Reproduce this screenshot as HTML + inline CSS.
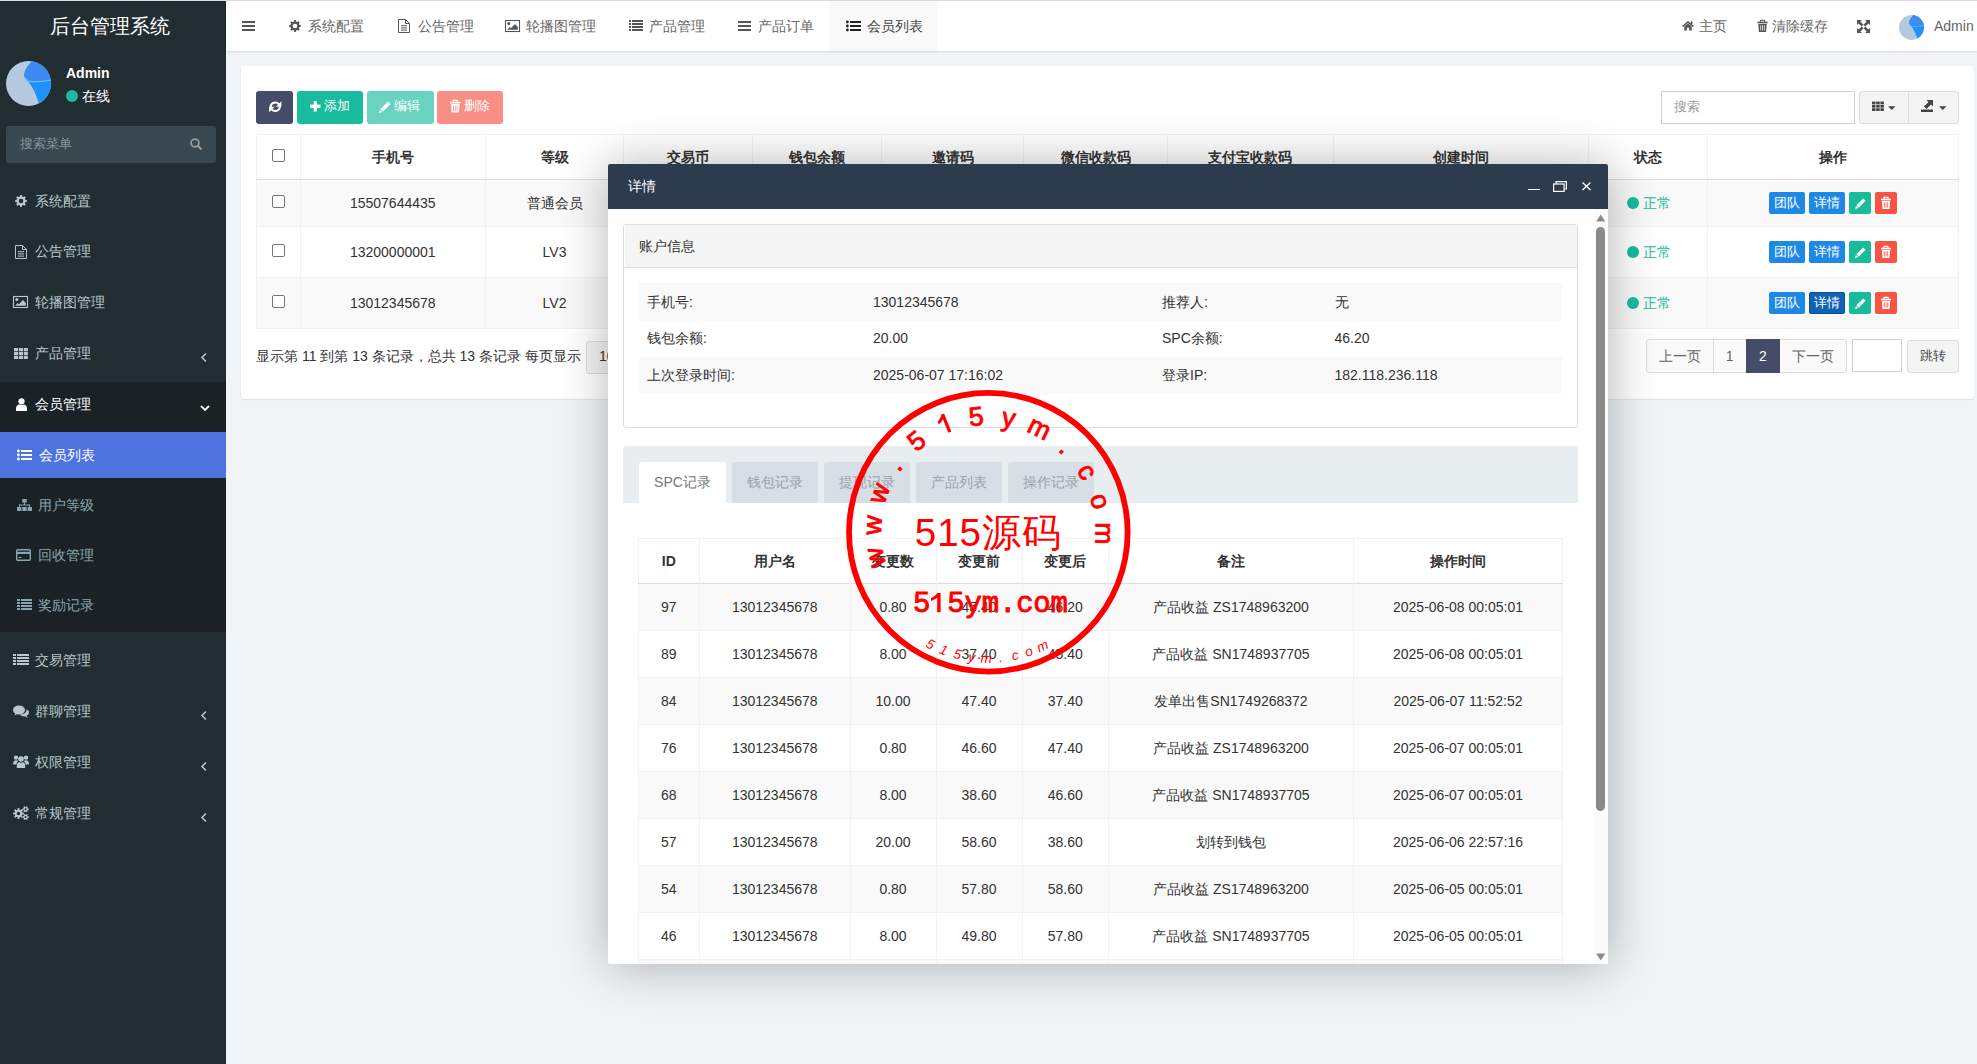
<!DOCTYPE html>
<html><head><meta charset="utf-8"><style>
*{box-sizing:border-box;margin:0;padding:0}
html,body{width:1977px;height:1064px;overflow:hidden}
body{font-family:"Liberation Sans",sans-serif;font-size:14px;color:#333;background:#f1f4f6;position:relative}
.abs{position:absolute}
.t{line-height:20px;white-space:nowrap}
svg.abs{display:block;overflow:visible}
</style></head><body>
<div class="abs" style="left:0;top:0;width:1977px;height:1px;background:#d9d9d9;z-index:50"></div>
<div class="abs" style="left:0;top:1px;width:226px;height:1063px;background:#222d32"></div>
<div class="abs t " style="left:-3px;top:16px;width:226px;text-align:center;font-size:20px;color:#fff;">后台管理系统</div>
<svg class="abs" style="left:6px;top:61px;width:45px;height:45px" viewBox="0 0 45 45">
<defs><clipPath id="av1"><circle cx="22.5" cy="22.5" r="22.5"/></clipPath>
<linearGradient id="avg" x1="0" y1="0" x2="0" y2="1"><stop offset="0" stop-color="#4a8ff2"/><stop offset="0.45" stop-color="#3a88f0"/><stop offset="0.455" stop-color="#72ccff"/><stop offset="0.49" stop-color="#2196ff"/><stop offset="1" stop-color="#1a84ec"/></linearGradient></defs>
<g clip-path="url(#av1)"><rect width="45" height="45" fill="#b5cae0"/>
<path d="M26.3,0 C21,5 17.5,11 18.4,15.5 C19,18 21,20 23,21.5 C25.5,25 29.5,31 33,43 L45,45 L45,0Z" fill="#1f93fd"/><path d="M26.3,0 C21,5 17.5,11 18.4,15.5 C20,19.5 24,20.8 28,20.8 C35,20.8 40,19.5 45,19.2 L45,0Z" fill="#3d8af1"/><path d="M18.5,16 C20,19.5 24,20.8 28,20.8 C35,20.8 40,19.5 45,19.2" fill="none" stroke="#70cdff" stroke-width="0.9"/></g></svg>
<div class="abs t " style="left:66px;top:63px;font-weight:bold;color:#fff;font-size:14px">Admin</div>
<div class="abs" style="left:66px;top:90px;width:12px;height:12px;border-radius:50%;background:#18bc9c"></div>
<div class="abs t " style="left:82px;top:86px;color:#fff;font-size:14px">在线</div>
<div class="abs" style="left:6px;top:126px;width:210px;height:37px;border-radius:3px;background:#374850"></div>
<div class="abs t " style="left:20px;top:134px;color:#8a9499;font-size:13px">搜索菜单</div>
<svg class="abs" style="left:190px;top:138px;width:12px;height:12px;color:#999;" viewBox="0 0 12 12" fill="#999" color="#999"><circle cx="5" cy="5" r="3.9" fill="none" stroke="currentColor" stroke-width="1.8"/><path d="M7.8,7.8 L11,11" stroke="currentColor" stroke-width="2.2" stroke-linecap="round"/></svg>
<div class="abs" style="left:0;top:382px;width:226px;height:250px;background:#1a2226"></div>
<div class="abs" style="left:0;top:432px;width:226px;height:46px;background:#4e73df"></div>
<div class="abs" style="left:0;top:0;color:#b8c7ce"><svg class="abs" style="left:15px;top:195px;width:12px;height:12px;color:#b8c7ce;" viewBox="0 0 13 13" fill="#b8c7ce" color="#b8c7ce"><path fill-rule="evenodd" d="M5.33,1.64 L5.63,0.06 L7.37,0.06 L7.67,1.64 L9.11,2.24 L10.44,1.33 L11.67,2.56 L10.76,3.89 L11.36,5.33 L12.94,5.63 L12.94,7.37 L11.36,7.67 L10.76,9.11 L11.67,10.44 L10.44,11.67 L9.11,10.76 L7.67,11.36 L7.37,12.94 L5.63,12.94 L5.33,11.36 L3.89,10.76 L2.56,11.67 L1.33,10.44 L2.24,9.11 L1.64,7.67 L0.06,7.37 L0.06,5.63 L1.64,5.33 L2.24,3.89 L1.33,2.56 L2.56,1.33 L3.89,2.24ZM6.5,4.0 A2.5,2.5 0 1,0 6.5,9.0 A2.5,2.5 0 1,0 6.5,4.0Z"/></svg></div>
<div class="abs t " style="left:35px;top:191px;color:#b8c7ce">系统配置</div>
<div class="abs" style="left:0;top:0;color:#b8c7ce"><svg class="abs" style="left:15px;top:245px;width:12px;height:14px;color:#b8c7ce;" viewBox="0 0 12 14" fill="#b8c7ce" color="#b8c7ce"><path fill="none" stroke="currentColor" stroke-width="1" d="M0.5,0.5 H7.5 L11.5,4.5 V13.5 H0.5 Z M7.5,0.5 V4.5 H11.5"/><rect x="3" y="6.2" width="6" height="1"/><rect x="3" y="8.4" width="6" height="1"/><rect x="3" y="10.6" width="6" height="1"/></svg></div>
<div class="abs t " style="left:35px;top:241px;color:#b8c7ce">公告管理</div>
<div class="abs" style="left:0;top:0;color:#b8c7ce"><svg class="abs" style="left:13px;top:296px;width:15px;height:12px;color:#b8c7ce;" viewBox="0 0 15 12" fill="#b8c7ce" color="#b8c7ce"><rect x="0.5" y="0.5" width="14" height="11" fill="none" stroke="currentColor" stroke-width="1.1"/><circle cx="3.8" cy="3.4" r="1.5"/><path d="M2.2,9.7 L4.6,7 L5.9,8.2 L10,4 L12.8,6.9 V9.7 Z"/></svg></div>
<div class="abs t " style="left:35px;top:292px;color:#b8c7ce">轮播图管理</div>
<div class="abs" style="left:0;top:0;color:#b8c7ce"><svg class="abs" style="left:14px;top:348px;width:14px;height:11px;color:#b8c7ce;" viewBox="0 0 14 11" fill="#b8c7ce" color="#b8c7ce"><rect x="0.0" y="0.0" width="4.1" height="3.2"/><rect x="0.0" y="3.9" width="4.1" height="3.2"/><rect x="0.0" y="7.8" width="4.1" height="3.2"/><rect x="4.9" y="0.0" width="4.1" height="3.2"/><rect x="4.9" y="3.9" width="4.1" height="3.2"/><rect x="4.9" y="7.8" width="4.1" height="3.2"/><rect x="9.8" y="0.0" width="4.1" height="3.2"/><rect x="9.8" y="3.9" width="4.1" height="3.2"/><rect x="9.8" y="7.8" width="4.1" height="3.2"/></svg></div>
<div class="abs t " style="left:35px;top:343px;color:#b8c7ce">产品管理</div>
<svg class="abs" style="left:201px;top:352.5px;width:6px;height:9px;color:#b8c7ce;" viewBox="0 0 6 9" fill="#b8c7ce" color="#b8c7ce"><path d="M5,0.5 L1,4.5 L5,8.5" fill="none" stroke="currentColor" stroke-width="1.6"/></svg>
<svg class="abs" style="left:16px;top:397.5px;width:11px;height:13px;color:#fff;" viewBox="0 0 11 13" fill="#fff" color="#fff"><circle cx="5.5" cy="3.3" r="3.1"/><path d="M0,13 V10.5 C0,8 1.8,6.8 3.2,6.6 C4,7.2 7,7.2 7.8,6.6 C9.2,6.8 11,8 11,10.5 V13 Z"/></svg>
<div class="abs t " style="left:35px;top:394px;color:#fff">会员管理</div>
<svg class="abs" style="left:200px;top:405px;width:10px;height:6px;color:#fff;" viewBox="0 0 10 6" fill="#fff" color="#fff"><path d="M1,1 L5,5 L9,1" fill="none" stroke="currentColor" stroke-width="1.8"/></svg>
<svg class="abs" style="left:17px;top:450px;width:15px;height:10px;color:#fff;" viewBox="0 0 15 10" fill="#fff" color="#fff"><circle cx="1.4" cy="1" r="1.4"/><rect x="4" y="0" width="11" height="2"/><circle cx="1.4" cy="5" r="1.4"/><rect x="4" y="4" width="11" height="2"/><circle cx="1.4" cy="9" r="1.4"/><rect x="4" y="8" width="11" height="2"/></svg>
<div class="abs t " style="left:39px;top:444.5px;color:#fff">会员列表</div>
<svg class="abs" style="left:16.5px;top:499px;width:15px;height:12px;color:#8aa4af;" viewBox="0 0 15 12" fill="#8aa4af" color="#8aa4af"><rect x="5.2" y="0" width="4.6" height="3.6"/><rect x="7" y="3.6" width="1" height="2.4"/><rect x="2" y="5.5" width="11" height="1"/><rect x="2" y="5.5" width="1" height="2.5"/><rect x="12" y="5.5" width="1" height="2.5"/><rect x="0" y="8" width="4.4" height="4"/><rect x="5.3" y="8" width="4.4" height="4"/><rect x="10.6" y="8" width="4.4" height="4"/></svg>
<div class="abs t " style="left:38px;top:495px;color:#8aa4af">用户等级</div>
<svg class="abs" style="left:16px;top:549px;width:15px;height:12px;color:#8aa4af;" viewBox="0 0 15 12" fill="#8aa4af" color="#8aa4af"><rect x="0.7" y="0.7" width="13.6" height="10.6" rx="1" fill="none" stroke="currentColor" stroke-width="1.4"/><rect x="0.7" y="2.8" width="13.6" height="2.2"/><rect x="2.5" y="8" width="3" height="1"/></svg>
<div class="abs t " style="left:38px;top:545px;color:#8aa4af">回收管理</div>
<svg class="abs" style="left:16.5px;top:599px;width:15px;height:11px;color:#8aa4af;" viewBox="0 0 15 11" fill="#8aa4af" color="#8aa4af"><rect x="0" y="0" width="3" height="2"/><rect x="4" y="0" width="11" height="2"/><rect x="0" y="3" width="3" height="2"/><rect x="4" y="3" width="11" height="2"/><rect x="0" y="6" width="3" height="2"/><rect x="4" y="6" width="11" height="2"/><rect x="0" y="9" width="3" height="2"/><rect x="4" y="9" width="11" height="2"/></svg>
<div class="abs t " style="left:38px;top:595px;color:#8aa4af">奖励记录</div>
<svg class="abs" style="left:13px;top:654px;width:16px;height:11px;color:#b8c7ce;" viewBox="0 0 16 11" fill="#b8c7ce" color="#b8c7ce"><rect x="0" y="0" width="3" height="2"/><rect x="4" y="0" width="12" height="2"/><rect x="0" y="3" width="3" height="2"/><rect x="4" y="3" width="12" height="2"/><rect x="0" y="6" width="3" height="2"/><rect x="4" y="6" width="12" height="2"/><rect x="0" y="9" width="3" height="2"/><rect x="4" y="9" width="12" height="2"/></svg>
<div class="abs t " style="left:35px;top:650px;color:#b8c7ce">交易管理</div>
<svg class="abs" style="left:13px;top:704.5px;width:16px;height:13px;color:#b8c7ce;" viewBox="0 0 16 13" fill="#b8c7ce" color="#b8c7ce"><ellipse cx="6" cy="5" rx="6" ry="4.6"/><path d="M1.5,10.5 L3,7 L5,8.5Z"/><path d="M13.8,4.2 C15.3,5 16,6.2 16,7.4 C16,8.8 15,10 13.5,10.6 L14.8,12.8 L11.5,11.2 C9,11.3 7.5,10.6 6.6,9.7 C10.5,9.6 13.6,7.5 13.8,4.2Z"/></svg>
<div class="abs t " style="left:35px;top:701px;color:#b8c7ce">群聊管理</div>
<svg class="abs" style="left:201px;top:710.5px;width:6px;height:9px;color:#b8c7ce;" viewBox="0 0 6 9" fill="#b8c7ce" color="#b8c7ce"><path d="M5,0.5 L1,4.5 L5,8.5" fill="none" stroke="currentColor" stroke-width="1.6"/></svg>
<svg class="abs" style="left:13px;top:755px;width:16px;height:13px;color:#b8c7ce;" viewBox="0 0 16 13" fill="#b8c7ce" color="#b8c7ce"><circle cx="3" cy="2.6" r="2.2"/><circle cx="13" cy="2.6" r="2.2"/><circle cx="8" cy="4" r="2.8"/><path d="M0,9.5 C0,6.5 1.5,5.3 3,5.3 C4,5.3 4.7,5.8 5,6.2 C4,7 3.5,8.2 3.5,9.5Z"/><path d="M16,9.5 C16,6.5 14.5,5.3 13,5.3 C12,5.3 11.3,5.8 11,6.2 C12,7 12.5,8.2 12.5,9.5Z"/><path d="M3.8,13 V10.5 C3.8,8.3 5.3,7.2 6.2,7.2 C7,7.8 9,7.8 9.8,7.2 C10.7,7.2 12.2,8.3 12.2,10.5 V13Z"/></svg>
<div class="abs t " style="left:35px;top:752px;color:#b8c7ce">权限管理</div>
<svg class="abs" style="left:201px;top:761.5px;width:6px;height:9px;color:#b8c7ce;" viewBox="0 0 6 9" fill="#b8c7ce" color="#b8c7ce"><path d="M5,0.5 L1,4.5 L5,8.5" fill="none" stroke="currentColor" stroke-width="1.6"/></svg>
<svg class="abs" style="left:13px;top:806px;width:16px;height:14px;color:#b8c7ce;" viewBox="0 0 16 14" fill="#b8c7ce" color="#b8c7ce"><path fill-rule="evenodd" d="M9.28,6.53 L10.93,6.64 L10.93,8.36 L9.28,8.47 L8.86,9.49 L9.95,10.73 L8.73,11.95 L7.49,10.86 L6.47,11.28 L6.36,12.93 L4.64,12.93 L4.53,11.28 L3.51,10.86 L2.27,11.95 L1.05,10.73 L2.14,9.49 L1.72,8.47 L0.07,8.36 L0.07,6.64 L1.72,6.53 L2.14,5.51 L1.05,4.27 L2.27,3.05 L3.51,4.14 L4.53,3.72 L4.64,2.07 L6.36,2.07 L6.47,3.72 L7.49,4.14 L8.73,3.05 L9.95,4.27 L8.86,5.51ZM5.5,5.7 A1.8,1.8 0 1,0 5.5,9.3 A1.8,1.8 0 1,0 5.5,5.7ZM14.77,2.44 L15.73,2.53 L15.73,3.87 L14.77,3.96 L14.34,4.70 L14.74,5.58 L13.59,6.24 L13.03,5.46 L12.17,5.46 L11.61,6.24 L10.46,5.58 L10.86,4.70 L10.43,3.96 L9.47,3.87 L9.47,2.53 L10.43,2.44 L10.86,1.70 L10.46,0.82 L11.61,0.16 L12.17,0.94 L13.03,0.94 L13.59,0.16 L14.74,0.82 L14.34,1.70ZM12.6,2.2 A1.0,1.0 0 1,0 12.6,4.2 A1.0,1.0 0 1,0 12.6,2.2ZM14.77,10.24 L15.73,10.33 L15.73,11.67 L14.77,11.76 L14.34,12.50 L14.74,13.38 L13.59,14.04 L13.03,13.26 L12.17,13.26 L11.61,14.04 L10.46,13.38 L10.86,12.50 L10.43,11.76 L9.47,11.67 L9.47,10.33 L10.43,10.24 L10.86,9.50 L10.46,8.62 L11.61,7.96 L12.17,8.74 L13.03,8.74 L13.59,7.96 L14.74,8.62 L14.34,9.50ZM12.6,10.0 A1.0,1.0 0 1,0 12.6,12.0 A1.0,1.0 0 1,0 12.6,10.0Z"/></svg>
<div class="abs t " style="left:35px;top:803px;color:#b8c7ce">常规管理</div>
<svg class="abs" style="left:201px;top:812.5px;width:6px;height:9px;color:#b8c7ce;" viewBox="0 0 6 9" fill="#b8c7ce" color="#b8c7ce"><path d="M5,0.5 L1,4.5 L5,8.5" fill="none" stroke="currentColor" stroke-width="1.6"/></svg>
<div class="abs" style="left:226px;top:1px;width:1751px;height:50px;background:#fff;box-shadow:0 1px 2px rgba(0,0,0,.12)"></div>
<div class="abs" style="left:829px;top:1px;width:109px;height:50px;background:#f9f9f9"></div>
<svg class="abs" style="left:242px;top:21px;width:13px;height:10px;color:#555;" viewBox="0 0 13 10" fill="#555" color="#555"><rect x="0" y="0" width="13" height="2"/><rect x="0" y="4" width="13" height="2"/><rect x="0" y="8" width="13" height="2"/></svg>
<svg class="abs" style="left:289px;top:20px;width:12px;height:12px;color:#555;" viewBox="0 0 13 13" fill="#555" color="#555"><path fill-rule="evenodd" d="M5.33,1.64 L5.63,0.06 L7.37,0.06 L7.67,1.64 L9.11,2.24 L10.44,1.33 L11.67,2.56 L10.76,3.89 L11.36,5.33 L12.94,5.63 L12.94,7.37 L11.36,7.67 L10.76,9.11 L11.67,10.44 L10.44,11.67 L9.11,10.76 L7.67,11.36 L7.37,12.94 L5.63,12.94 L5.33,11.36 L3.89,10.76 L2.56,11.67 L1.33,10.44 L2.24,9.11 L1.64,7.67 L0.06,7.37 L0.06,5.63 L1.64,5.33 L2.24,3.89 L1.33,2.56 L2.56,1.33 L3.89,2.24ZM6.5,4.0 A2.5,2.5 0 1,0 6.5,9.0 A2.5,2.5 0 1,0 6.5,4.0Z"/></svg>
<div class="abs t " style="left:308px;top:16px;color:#666">系统配置</div>
<svg class="abs" style="left:398px;top:19px;width:12px;height:14px;color:#555;" viewBox="0 0 12 14" fill="#555" color="#555"><path fill="none" stroke="currentColor" stroke-width="1" d="M0.5,0.5 H7.5 L11.5,4.5 V13.5 H0.5 Z M7.5,0.5 V4.5 H11.5"/><rect x="3" y="6.2" width="6" height="1"/><rect x="3" y="8.4" width="6" height="1"/><rect x="3" y="10.6" width="6" height="1"/></svg>
<div class="abs t " style="left:418px;top:16px;color:#666">公告管理</div>
<svg class="abs" style="left:505px;top:20px;width:15px;height:12px;color:#555;" viewBox="0 0 15 12" fill="#555" color="#555"><rect x="0.5" y="0.5" width="14" height="11" fill="none" stroke="currentColor" stroke-width="1.1"/><circle cx="3.8" cy="3.4" r="1.5"/><path d="M2.2,9.7 L4.6,7 L5.9,8.2 L10,4 L12.8,6.9 V9.7 Z"/></svg>
<div class="abs t " style="left:526px;top:16px;color:#666">轮播图管理</div>
<svg class="abs" style="left:629px;top:20px;width:14px;height:11px;color:#555;" viewBox="0 0 14 11" fill="#555" color="#555"><rect x="0" y="0" width="2" height="2"/><rect x="3" y="0" width="11" height="2"/><rect x="0" y="3" width="2" height="2"/><rect x="3" y="3" width="11" height="2"/><rect x="0" y="6" width="2" height="2"/><rect x="3" y="6" width="11" height="2"/><rect x="0" y="9" width="2" height="2"/><rect x="3" y="9" width="11" height="2"/></svg>
<div class="abs t " style="left:648.5px;top:16px;color:#666">产品管理</div>
<svg class="abs" style="left:738px;top:21px;width:13px;height:10px;color:#555;" viewBox="0 0 13 10" fill="#555" color="#555"><rect x="0" y="0" width="13" height="2"/><rect x="0" y="4" width="13" height="2"/><rect x="0" y="8" width="13" height="2"/></svg>
<div class="abs t " style="left:757.5px;top:16px;color:#666">产品订单</div>
<svg class="abs" style="left:846px;top:21px;width:15px;height:10px;color:#222;" viewBox="0 0 15 10" fill="#222" color="#222"><circle cx="1.4" cy="1" r="1.4"/><rect x="4" y="0" width="11" height="2"/><circle cx="1.4" cy="5" r="1.4"/><rect x="4" y="4" width="11" height="2"/><circle cx="1.4" cy="9" r="1.4"/><rect x="4" y="8" width="11" height="2"/></svg>
<div class="abs t " style="left:866.5px;top:16px;color:#444">会员列表</div>
<svg class="abs" style="left:1682px;top:20px;width:12px;height:11px;color:#555;" viewBox="0 0 13 11" fill="#555" color="#555"><path d="M6.5,0.5 L13,6 L11.8,7.2 L6.5,2.8 L1.2,7.2 L0,6 Z"/><path d="M2.5,6.5 L6.5,3.3 L10.5,6.5 V11 H7.7 V8 H5.3 V11 H2.5Z"/><rect x="9.5" y="1" width="1.8" height="3"/></svg>
<div class="abs t " style="left:1699px;top:16px;color:#666">主页</div>
<svg class="abs" style="left:1757px;top:20px;width:11px;height:12px;color:#555;" viewBox="0 0 11 13" fill="#555" color="#555"><rect x="0" y="1.8" width="11" height="1.8"/><path d="M3.3,2 V0.3 H7.7 V2" fill="none" stroke="currentColor" stroke-width="1.2"/><path fill-rule="evenodd" d="M1,4.2 H10 L9.4,13 H1.6Z M3.2,5.6 V11.4 H4 V5.6Z M5.1,5.6 V11.4 H5.9 V5.6Z M7,5.6 V11.4 H7.8 V5.6Z"/></svg>
<div class="abs t " style="left:1772px;top:16px;color:#666">清除缓存</div>
<svg class="abs" style="left:1857px;top:19.5px;width:13px;height:13px;color:#555;" viewBox="0 0 13 13" fill="#555" color="#555"><path d="M0,0 H5 L3.4,1.6 L6.5,4.7 L4.7,6.5 L1.6,3.4 L0,5Z"/><path d="M13,0 V5 L11.4,3.4 L8.3,6.5 L6.5,4.7 L9.6,1.6 L8,0Z"/><path d="M0,13 V8 L1.6,9.6 L4.7,6.5 L6.5,8.3 L3.4,11.4 L5,13Z"/><path d="M13,13 H8 L9.6,11.4 L6.5,8.3 L8.3,6.5 L11.4,9.6 L13,8Z"/></svg>
<svg class="abs" style="left:1899px;top:15px;width:25px;height:25px" viewBox="0 0 45 45">
<g clip-path="url(#av1)"><rect width="45" height="45" fill="#b3c9df"/>
<path d="M26.3,0 C21,5 17.5,11 18.4,15.5 C19,18 21,20 23,21.5 C25.5,25 29.5,31 33,43 L45,45 L45,0Z" fill="#1f93fd"/><path d="M26.3,0 C21,5 17.5,11 18.4,15.5 C20,19.5 24,20.8 28,20.8 C35,20.8 40,19.5 45,19.2 L45,0Z" fill="#3d8af1"/><path d="M18.5,16 C20,19.5 24,20.8 28,20.8 C35,20.8 40,19.5 45,19.2" fill="none" stroke="#70cdff" stroke-width="0.9"/></g></svg>
<div class="abs t " style="left:1934px;top:16px;color:#666">Admin</div>
<div class="abs" style="left:241px;top:66px;width:1733px;height:333px;background:#fff;border-radius:3px;box-shadow:0 1px 1px rgba(0,0,0,.07), -1px 0 0 rgba(0,0,0,.02)"></div>
<div class="abs" style="left:256px;top:91px;width:37px;height:33px;background:#444c69;border-radius:3px;"></div>
<svg class="abs" style="left:268.5px;top:100.5px;width:12.5px;height:11.5px;color:#fff;" viewBox="0 0 13 12" fill="#fff" color="#fff"><path d="M1.6,6.2 A4.9,4.9 0 0,1 10.2,3.3" fill="none" stroke="currentColor" stroke-width="2.1"/><path d="M12.9,0.2 V6 H7.1Z"/><path d="M11.4,5.8 A4.9,4.9 0 0,1 2.8,8.7" fill="none" stroke="currentColor" stroke-width="2.1"/><path d="M0.1,11.8 V6 H5.9Z"/></svg>
<div class="abs" style="left:297px;top:91px;width:66px;height:33px;background:#18bc9c;border-radius:3px;"></div>
<svg class="abs" style="left:310px;top:101px;width:10.5px;height:10.5px;color:#fff;" viewBox="0 0 11 11" fill="#fff" color="#fff"><rect x="3.8" y="0" width="3.4" height="11"/><rect x="0" y="3.8" width="11" height="3.4"/></svg>
<div class="abs t " style="left:324px;top:96px;color:#fff;font-size:13px">添加</div>
<div class="abs" style="left:367px;top:91px;width:67px;height:33px;background:#69d3bf;border-radius:3px;"></div>
<svg class="abs" style="left:379px;top:100.5px;width:12px;height:12px;color:#fff;" viewBox="0 0 12 12" fill="#fff" color="#fff"><path d="M9,0.5 L11.5,3 L4,10.5 L1.5,8Z"/><path d="M1,8.6 L3.4,11 L0,12Z"/></svg>
<div class="abs t " style="left:394px;top:96px;color:#fff;font-size:13px">编辑</div>
<div class="abs" style="left:437px;top:91px;width:66px;height:33px;background:#f98f84;border-radius:3px;"></div>
<svg class="abs" style="left:450px;top:100px;width:10.5px;height:12.5px;color:#fff;" viewBox="0 0 11 13" fill="#fff" color="#fff"><rect x="0" y="1.8" width="11" height="1.8"/><path d="M3.3,2 V0.3 H7.7 V2" fill="none" stroke="currentColor" stroke-width="1.2"/><path fill-rule="evenodd" d="M1,4.2 H10 L9.4,13 H1.6Z M3.2,5.6 V11.4 H4 V5.6Z M5.1,5.6 V11.4 H5.9 V5.6Z M7,5.6 V11.4 H7.8 V5.6Z"/></svg>
<div class="abs t " style="left:464px;top:96px;color:#fff;font-size:13px">删除</div>
<div class="abs" style="left:1661px;top:91px;width:194px;height:33px;background:#fff;border-radius:0px;border:1px solid #ccd3dc;"></div>
<div class="abs t " style="left:1674px;top:97px;color:#999;font-size:13px">搜索</div>
<div class="abs" style="left:1859px;top:91px;width:100px;height:33px;background:#f4f4f4;border-radius:3px;border:1px solid #ddd;"></div>
<div class="abs" style="left:1908px;top:91px;width:1px;height:33px;background:#ddd"></div>
<svg class="abs" style="left:1872px;top:99.5px;width:12px;height:12.5px;color:#444;" viewBox="0 0 14 11" fill="#444" color="#444"><rect x="0.0" y="0.0" width="4.1" height="3.2"/><rect x="0.0" y="3.9" width="4.1" height="3.2"/><rect x="0.0" y="7.8" width="4.1" height="3.2"/><rect x="4.9" y="0.0" width="4.1" height="3.2"/><rect x="4.9" y="3.9" width="4.1" height="3.2"/><rect x="4.9" y="7.8" width="4.1" height="3.2"/><rect x="9.8" y="0.0" width="4.1" height="3.2"/><rect x="9.8" y="3.9" width="4.1" height="3.2"/><rect x="9.8" y="7.8" width="4.1" height="3.2"/></svg>
<svg class="abs" style="left:1888px;top:106px;width:7.5px;height:4px;color:#444;" viewBox="0 0 8 4" fill="#444" color="#444"><path d="M0,0 H8 L4,4Z"/></svg>
<svg class="abs" style="left:1921px;top:99px;width:13px;height:13px;color:#444;" viewBox="0 0 13 13" fill="#444" color="#444"><rect x="0" y="10.5" width="12" height="2.5"/><path d="M5.5,1 H12 V7.5 L10,5.5 L5.5,10 L3,7.5 L7.5,3 Z"/></svg>
<svg class="abs" style="left:1938.5px;top:106px;width:7.5px;height:4px;color:#444;" viewBox="0 0 8 4" fill="#444" color="#444"><path d="M0,0 H8 L4,4Z"/></svg>
<div class="abs" style="left:256px;top:180px;width:1703px;height:46px;background:#f9f9f9"></div>
<div class="abs" style="left:256px;top:277px;width:1703px;height:51px;background:#f9f9f9"></div>
<div class="abs" style="left:256px;top:134px;width:1703px;height:195px;border:1px solid #f2f2f2"></div>
<div class="abs" style="left:299.5px;top:134px;width:1px;height:195px;background:#f2f2f2"></div>
<div class="abs" style="left:485.0px;top:134px;width:1px;height:195px;background:#f2f2f2"></div>
<div class="abs" style="left:623.0px;top:134px;width:1px;height:195px;background:#f2f2f2"></div>
<div class="abs" style="left:752.0px;top:134px;width:1px;height:195px;background:#f2f2f2"></div>
<div class="abs" style="left:881.0px;top:134px;width:1px;height:195px;background:#f2f2f2"></div>
<div class="abs" style="left:1023.0px;top:134px;width:1px;height:195px;background:#f2f2f2"></div>
<div class="abs" style="left:1167.0px;top:134px;width:1px;height:195px;background:#f2f2f2"></div>
<div class="abs" style="left:1332.5px;top:134px;width:1px;height:195px;background:#f2f2f2"></div>
<div class="abs" style="left:1588.0px;top:134px;width:1px;height:195px;background:#f2f2f2"></div>
<div class="abs" style="left:1707.0px;top:134px;width:1px;height:195px;background:#f2f2f2"></div>
<div class="abs" style="left:256px;top:179px;width:1703px;height:1px;background:#ddd"></div>
<div class="abs" style="left:256px;top:226px;width:1703px;height:1px;background:#f2f2f2"></div>
<div class="abs" style="left:256px;top:277px;width:1703px;height:1px;background:#f2f2f2"></div>
<div class="abs" style="left:272px;top:149px;width:13px;height:13px;border:1px solid #767676;border-radius:2px;background:#fff"></div>
<div class="abs" style="left:272px;top:195px;width:13px;height:13px;border:1px solid #767676;border-radius:2px;background:#fff"></div>
<div class="abs" style="left:272px;top:244px;width:13px;height:13px;border:1px solid #767676;border-radius:2px;background:#fff"></div>
<div class="abs" style="left:272px;top:295px;width:13px;height:13px;border:1px solid #767676;border-radius:2px;background:#fff"></div>
<div class="abs t" style="left:292.75px;top:147px;width:200px;text-align:center;font-weight:bold;color:#333">手机号</div>
<div class="abs t" style="left:454.5px;top:147px;width:200px;text-align:center;font-weight:bold;color:#333">等级</div>
<div class="abs t" style="left:588.0px;top:147px;width:200px;text-align:center;font-weight:bold;color:#333">交易币</div>
<div class="abs t" style="left:717.0px;top:147px;width:200px;text-align:center;font-weight:bold;color:#333">钱包余额</div>
<div class="abs t" style="left:852.5px;top:147px;width:200px;text-align:center;font-weight:bold;color:#333">邀请码</div>
<div class="abs t" style="left:995.5px;top:147px;width:200px;text-align:center;font-weight:bold;color:#333">微信收款码</div>
<div class="abs t" style="left:1150.25px;top:147px;width:200px;text-align:center;font-weight:bold;color:#333">支付宝收款码</div>
<div class="abs t" style="left:1360.75px;top:147px;width:200px;text-align:center;font-weight:bold;color:#333">创建时间</div>
<div class="abs t" style="left:1548.0px;top:147px;width:200px;text-align:center;font-weight:bold;color:#333">状态</div>
<div class="abs t" style="left:1733.25px;top:147px;width:200px;text-align:center;font-weight:bold;color:#333">操作</div>
<div class="abs t" style="left:302.75px;top:193px;width:180px;text-align:center;color:#333">15507644435</div>
<div class="abs t" style="left:489.5px;top:193px;width:130px;text-align:center;color:#333">普通会员</div>
<div class="abs" style="left:1626.5px;top:196.5px;width:12.5px;height:12.5px;border-radius:50%;background:#18bc9c"></div>
<div class="abs t " style="left:1642.5px;top:193px;color:#18bc9c">正常</div>
<div class="abs" style="left:1769px;top:192px;width:36px;height:22px;background:#1e88e5;border-radius:2px;"></div>
<div class="abs t " style="left:1773.5px;top:193px;color:#fff;font-size:13px">团队</div>
<div class="abs" style="left:1809px;top:192px;width:36px;height:22px;background:#1e88e5;border-radius:2px;"></div>
<div class="abs t " style="left:1813.5px;top:193px;color:#fff;font-size:13px">详情</div>
<div class="abs" style="left:1849px;top:192px;width:22px;height:22px;background:#18bc9c;border-radius:2px;"></div>
<svg class="abs" style="left:1854.5px;top:197.5px;width:11px;height:11px;color:#fff;" viewBox="0 0 12 12" fill="#fff" color="#fff"><path d="M9,0.5 L11.5,3 L4,10.5 L1.5,8Z"/><path d="M1,8.6 L3.4,11 L0,12Z"/></svg>
<div class="abs" style="left:1875px;top:192px;width:22px;height:22px;background:#f75444;border-radius:2px;"></div>
<svg class="abs" style="left:1881px;top:197px;width:10px;height:12px;color:#fff;" viewBox="0 0 11 13" fill="#fff" color="#fff"><rect x="0" y="1.8" width="11" height="1.8"/><path d="M3.3,2 V0.3 H7.7 V2" fill="none" stroke="currentColor" stroke-width="1.2"/><path fill-rule="evenodd" d="M1,4.2 H10 L9.4,13 H1.6Z M3.2,5.6 V11.4 H4 V5.6Z M5.1,5.6 V11.4 H5.9 V5.6Z M7,5.6 V11.4 H7.8 V5.6Z"/></svg>
<div class="abs t" style="left:302.75px;top:242px;width:180px;text-align:center;color:#333">13200000001</div>
<div class="abs t" style="left:489.5px;top:242px;width:130px;text-align:center;color:#333">LV3</div>
<div class="abs" style="left:1626.5px;top:245.5px;width:12.5px;height:12.5px;border-radius:50%;background:#18bc9c"></div>
<div class="abs t " style="left:1642.5px;top:242px;color:#18bc9c">正常</div>
<div class="abs" style="left:1769px;top:241px;width:36px;height:22px;background:#1e88e5;border-radius:2px;"></div>
<div class="abs t " style="left:1773.5px;top:242px;color:#fff;font-size:13px">团队</div>
<div class="abs" style="left:1809px;top:241px;width:36px;height:22px;background:#1e88e5;border-radius:2px;"></div>
<div class="abs t " style="left:1813.5px;top:242px;color:#fff;font-size:13px">详情</div>
<div class="abs" style="left:1849px;top:241px;width:22px;height:22px;background:#18bc9c;border-radius:2px;"></div>
<svg class="abs" style="left:1854.5px;top:246.5px;width:11px;height:11px;color:#fff;" viewBox="0 0 12 12" fill="#fff" color="#fff"><path d="M9,0.5 L11.5,3 L4,10.5 L1.5,8Z"/><path d="M1,8.6 L3.4,11 L0,12Z"/></svg>
<div class="abs" style="left:1875px;top:241px;width:22px;height:22px;background:#f75444;border-radius:2px;"></div>
<svg class="abs" style="left:1881px;top:246px;width:10px;height:12px;color:#fff;" viewBox="0 0 11 13" fill="#fff" color="#fff"><rect x="0" y="1.8" width="11" height="1.8"/><path d="M3.3,2 V0.3 H7.7 V2" fill="none" stroke="currentColor" stroke-width="1.2"/><path fill-rule="evenodd" d="M1,4.2 H10 L9.4,13 H1.6Z M3.2,5.6 V11.4 H4 V5.6Z M5.1,5.6 V11.4 H5.9 V5.6Z M7,5.6 V11.4 H7.8 V5.6Z"/></svg>
<div class="abs t" style="left:302.75px;top:293px;width:180px;text-align:center;color:#333">13012345678</div>
<div class="abs t" style="left:489.5px;top:293px;width:130px;text-align:center;color:#333">LV2</div>
<div class="abs" style="left:1626.5px;top:296.5px;width:12.5px;height:12.5px;border-radius:50%;background:#18bc9c"></div>
<div class="abs t " style="left:1642.5px;top:293px;color:#18bc9c">正常</div>
<div class="abs" style="left:1769px;top:292px;width:36px;height:22px;background:#1e88e5;border-radius:2px;"></div>
<div class="abs t " style="left:1773.5px;top:293px;color:#fff;font-size:13px">团队</div>
<div class="abs" style="left:1809px;top:292px;width:36px;height:22px;background:#0d62b3;border-radius:2px;border:1px solid #0a4f91;"></div>
<div class="abs t " style="left:1813.5px;top:293px;color:#fff;font-size:13px">详情</div>
<div class="abs" style="left:1849px;top:292px;width:22px;height:22px;background:#18bc9c;border-radius:2px;"></div>
<svg class="abs" style="left:1854.5px;top:297.5px;width:11px;height:11px;color:#fff;" viewBox="0 0 12 12" fill="#fff" color="#fff"><path d="M9,0.5 L11.5,3 L4,10.5 L1.5,8Z"/><path d="M1,8.6 L3.4,11 L0,12Z"/></svg>
<div class="abs" style="left:1875px;top:292px;width:22px;height:22px;background:#f75444;border-radius:2px;"></div>
<svg class="abs" style="left:1881px;top:297px;width:10px;height:12px;color:#fff;" viewBox="0 0 11 13" fill="#fff" color="#fff"><rect x="0" y="1.8" width="11" height="1.8"/><path d="M3.3,2 V0.3 H7.7 V2" fill="none" stroke="currentColor" stroke-width="1.2"/><path fill-rule="evenodd" d="M1,4.2 H10 L9.4,13 H1.6Z M3.2,5.6 V11.4 H4 V5.6Z M5.1,5.6 V11.4 H5.9 V5.6Z M7,5.6 V11.4 H7.8 V5.6Z"/></svg>
<div class="abs t " style="left:256px;top:346px;color:#333">显示第 11 到第 13 条记录，总共 13 条记录 每页显示</div>
<div class="abs" style="left:586px;top:341px;width:54px;height:33px;background:#f4f4f4;border-radius:3px;border:1px solid #ddd;"></div>
<div class="abs t " style="left:599px;top:346px;color:#333">10</div>
<div class="abs" style="left:1646px;top:339px;width:200.5px;height:34px;background:#fafafa;border-radius:3px;border:1px solid #ddd;"></div>
<div class="abs" style="left:1713px;top:339px;width:1px;height:34px;background:#ddd"></div>
<div class="abs" style="left:1746px;top:339px;width:34px;height:34px;background:#444c69"></div>
<div class="abs t" style="left:1640.0px;top:346px;width:80px;text-align:center;color:#666">上一页</div>
<div class="abs t" style="left:1709.6px;top:346px;width:40px;text-align:center;color:#666">1</div>
<div class="abs t" style="left:1743.0px;top:346px;width:40px;text-align:center;color:#fff">2</div>
<div class="abs t" style="left:1773.0px;top:346px;width:80px;text-align:center;color:#666">下一页</div>
<div class="abs" style="left:1852px;top:339px;width:50px;height:33px;background:#fff;border-radius:0px;border:1px solid #ccd3dc;"></div>
<div class="abs" style="left:1907px;top:340px;width:52px;height:32.5px;background:#f4f4f4;border-radius:3px;border:1px solid #ddd;"></div>
<div class="abs t" style="left:1903.0px;top:345.5px;width:60px;text-align:center;color:#444;font-size:13px">跳转</div>
<div class="abs" style="left:608px;top:164px;width:1000px;height:800px;background:#fff;border-radius:2px;box-shadow:1px 1px 50px rgba(0,0,0,.3)"></div>
<div class="abs" style="left:608px;top:164px;width:1000px;height:45px;background:#2c3b4e;border-radius:2px 2px 0 0"></div>
<div class="abs t " style="left:628px;top:176px;color:#fff">详情</div>
<div class="abs" style="left:1528px;top:188.5px;width:11.5px;height:1.6px;background:#fff"></div>
<svg class="abs" style="left:1553px;top:181px;width:14px;height:11px" viewBox="0 0 14 11" fill="none" stroke="#fff" stroke-width="1.2">
<rect x="0.6" y="3" width="10.5" height="7.4"/><path d="M3,3 V0.6 H13.4 V8 H11.1"/></svg>
<svg class="abs" style="left:1581.5px;top:182px;width:9px;height:8.5px" viewBox="0 0 9 8.5" fill="none" stroke="#fff" stroke-width="1.3">
<path d="M0.5,0.5 L8.5,8 M8.5,0.5 L0.5,8"/></svg>
<div class="abs" style="left:0;top:209px;width:1593px;height:755px;overflow:hidden"><div class="abs" style="left:0;top:-209px;width:1977px;height:1064px">
<div class="abs" style="left:623px;top:224px;width:955px;height:203.5px;border:1px solid #ddd;border-radius:3px;background:#fff"></div>
<div class="abs" style="left:624.5px;top:225px;width:952.5px;height:42.5px;background:#f5f5f5;border-bottom:1px solid #ddd;border-radius:2px 2px 0 0"></div>
<div class="abs t " style="left:639px;top:236px;color:#333">账户信息</div>
<div class="abs" style="left:639px;top:283px;width:923px;height:37.5px;background:#f9f9f9"></div>
<div class="abs" style="left:639px;top:357.3px;width:923px;height:36.69999999999999px;background:#f9f9f9"></div>
<div class="abs t " style="left:647px;top:291.5px;">手机号:</div>
<div class="abs t " style="left:873px;top:291.5px;">13012345678</div>
<div class="abs t " style="left:1162px;top:291.5px;">推荐人:</div>
<div class="abs t " style="left:1334.5px;top:291.5px;">无</div>
<div class="abs t " style="left:647px;top:328px;">钱包余额:</div>
<div class="abs t " style="left:873px;top:328px;">20.00</div>
<div class="abs t " style="left:1162px;top:328px;">SPC余额:</div>
<div class="abs t " style="left:1334.5px;top:328px;">46.20</div>
<div class="abs t " style="left:647px;top:365px;">上次登录时间:</div>
<div class="abs t " style="left:873px;top:365px;">2025-06-07 17:16:02</div>
<div class="abs t " style="left:1162px;top:365px;">登录IP:</div>
<div class="abs t " style="left:1334.5px;top:365px;">182.118.236.118</div>
<div class="abs" style="left:623px;top:446px;width:955px;height:57px;background:#e8edf0;border-radius:3px 3px 0 0"></div>
<div class="abs" style="left:639px;top:462px;width:87px;height:41px;background:#fff;border-radius:3px 3px 0 0"></div>
<div class="abs t" style="left:637.5px;top:472px;width:90px;text-align:center;color:#777">SPC记录</div>
<div class="abs" style="left:731.8px;top:462px;width:86.0px;height:41px;background:#d7dee4;border-radius:3px 3px 0 0"></div>
<div class="abs t" style="left:729.8px;top:472px;width:90px;text-align:center;color:#9aa3a9">钱包记录</div>
<div class="abs" style="left:823.8px;top:462px;width:86.0px;height:41px;background:#d7dee4;border-radius:3px 3px 0 0"></div>
<div class="abs t" style="left:821.8px;top:472px;width:90px;text-align:center;color:#9aa3a9">提现记录</div>
<div class="abs" style="left:916px;top:462px;width:86px;height:41px;background:#d7dee4;border-radius:3px 3px 0 0"></div>
<div class="abs t" style="left:914.0px;top:472px;width:90px;text-align:center;color:#9aa3a9">产品列表</div>
<div class="abs" style="left:1008px;top:462px;width:86px;height:41px;background:#d7dee4;border-radius:3px 3px 0 0"></div>
<div class="abs t" style="left:1006.0px;top:472px;width:90px;text-align:center;color:#9aa3a9">操作记录</div>
<div class="abs" style="left:638px;top:538px;width:924.5px;height:430px;border:1px solid #f2f2f2"></div>
<div class="abs" style="left:639px;top:583px;width:922.5px;height:47px;background:#f9f9f9"></div>
<div class="abs" style="left:638px;top:629.5px;width:924.5px;height:1px;background:#f2f2f2"></div>
<div class="abs" style="left:639px;top:677px;width:922.5px;height:47px;background:#f9f9f9"></div>
<div class="abs" style="left:638px;top:676.5px;width:924.5px;height:1px;background:#f2f2f2"></div>
<div class="abs" style="left:638px;top:723.5px;width:924.5px;height:1px;background:#f2f2f2"></div>
<div class="abs" style="left:639px;top:771px;width:922.5px;height:47px;background:#f9f9f9"></div>
<div class="abs" style="left:638px;top:770.5px;width:924.5px;height:1px;background:#f2f2f2"></div>
<div class="abs" style="left:638px;top:817.5px;width:924.5px;height:1px;background:#f2f2f2"></div>
<div class="abs" style="left:639px;top:865px;width:922.5px;height:47px;background:#f9f9f9"></div>
<div class="abs" style="left:638px;top:864.5px;width:924.5px;height:1px;background:#f2f2f2"></div>
<div class="abs" style="left:638px;top:911.5px;width:924.5px;height:1px;background:#f2f2f2"></div>
<div class="abs" style="left:639px;top:959px;width:922.5px;height:47px;background:#f9f9f9"></div>
<div class="abs" style="left:638px;top:958.5px;width:924.5px;height:1px;background:#f2f2f2"></div>
<div class="abs" style="left:638px;top:582.5px;width:924.5px;height:1px;background:#ddd"></div>
<div class="abs" style="left:699.0px;top:538px;width:1px;height:430px;background:#f2f2f2"></div>
<div class="abs" style="left:849.5px;top:538px;width:1px;height:430px;background:#f2f2f2"></div>
<div class="abs" style="left:935.5px;top:538px;width:1px;height:430px;background:#f2f2f2"></div>
<div class="abs" style="left:1021.5px;top:538px;width:1px;height:430px;background:#f2f2f2"></div>
<div class="abs" style="left:1108.0px;top:538px;width:1px;height:430px;background:#f2f2f2"></div>
<div class="abs" style="left:1353.0px;top:538px;width:1px;height:430px;background:#f2f2f2"></div>
<div class="abs t" style="left:568.75px;top:551px;width:200px;text-align:center;font-weight:bold;color:#333">ID</div>
<div class="abs t" style="left:674.75px;top:551px;width:200px;text-align:center;font-weight:bold;color:#333">用户名</div>
<div class="abs t" style="left:793.0px;top:551px;width:200px;text-align:center;font-weight:bold;color:#333">变更数</div>
<div class="abs t" style="left:879.0px;top:551px;width:200px;text-align:center;font-weight:bold;color:#333">变更前</div>
<div class="abs t" style="left:965.25px;top:551px;width:200px;text-align:center;font-weight:bold;color:#333">变更后</div>
<div class="abs t" style="left:1131.0px;top:551px;width:200px;text-align:center;font-weight:bold;color:#333">备注</div>
<div class="abs t" style="left:1358.0px;top:551px;width:200px;text-align:center;font-weight:bold;color:#333">操作时间</div>
<div class="abs t" style="left:548.75px;top:597px;width:240px;text-align:center;color:#333">97</div>
<div class="abs t" style="left:654.75px;top:597px;width:240px;text-align:center;color:#333">13012345678</div>
<div class="abs t" style="left:773.0px;top:597px;width:240px;text-align:center;color:#333">0.80</div>
<div class="abs t" style="left:859.0px;top:597px;width:240px;text-align:center;color:#333">45.40</div>
<div class="abs t" style="left:945.25px;top:597px;width:240px;text-align:center;color:#333">46.20</div>
<div class="abs t" style="left:1111.0px;top:597px;width:240px;text-align:center;color:#333">产品收益 ZS1748963200</div>
<div class="abs t" style="left:1338.0px;top:597px;width:240px;text-align:center;color:#333">2025-06-08 00:05:01</div>
<div class="abs t" style="left:548.75px;top:644px;width:240px;text-align:center;color:#333">89</div>
<div class="abs t" style="left:654.75px;top:644px;width:240px;text-align:center;color:#333">13012345678</div>
<div class="abs t" style="left:773.0px;top:644px;width:240px;text-align:center;color:#333">8.00</div>
<div class="abs t" style="left:859.0px;top:644px;width:240px;text-align:center;color:#333">37.40</div>
<div class="abs t" style="left:945.25px;top:644px;width:240px;text-align:center;color:#333">45.40</div>
<div class="abs t" style="left:1111.0px;top:644px;width:240px;text-align:center;color:#333">产品收益 SN1748937705</div>
<div class="abs t" style="left:1338.0px;top:644px;width:240px;text-align:center;color:#333">2025-06-08 00:05:01</div>
<div class="abs t" style="left:548.75px;top:691px;width:240px;text-align:center;color:#333">84</div>
<div class="abs t" style="left:654.75px;top:691px;width:240px;text-align:center;color:#333">13012345678</div>
<div class="abs t" style="left:773.0px;top:691px;width:240px;text-align:center;color:#333">10.00</div>
<div class="abs t" style="left:859.0px;top:691px;width:240px;text-align:center;color:#333">47.40</div>
<div class="abs t" style="left:945.25px;top:691px;width:240px;text-align:center;color:#333">37.40</div>
<div class="abs t" style="left:1111.0px;top:691px;width:240px;text-align:center;color:#333">发单出售SN1749268372</div>
<div class="abs t" style="left:1338.0px;top:691px;width:240px;text-align:center;color:#333">2025-06-07 11:52:52</div>
<div class="abs t" style="left:548.75px;top:738px;width:240px;text-align:center;color:#333">76</div>
<div class="abs t" style="left:654.75px;top:738px;width:240px;text-align:center;color:#333">13012345678</div>
<div class="abs t" style="left:773.0px;top:738px;width:240px;text-align:center;color:#333">0.80</div>
<div class="abs t" style="left:859.0px;top:738px;width:240px;text-align:center;color:#333">46.60</div>
<div class="abs t" style="left:945.25px;top:738px;width:240px;text-align:center;color:#333">47.40</div>
<div class="abs t" style="left:1111.0px;top:738px;width:240px;text-align:center;color:#333">产品收益 ZS1748963200</div>
<div class="abs t" style="left:1338.0px;top:738px;width:240px;text-align:center;color:#333">2025-06-07 00:05:01</div>
<div class="abs t" style="left:548.75px;top:785px;width:240px;text-align:center;color:#333">68</div>
<div class="abs t" style="left:654.75px;top:785px;width:240px;text-align:center;color:#333">13012345678</div>
<div class="abs t" style="left:773.0px;top:785px;width:240px;text-align:center;color:#333">8.00</div>
<div class="abs t" style="left:859.0px;top:785px;width:240px;text-align:center;color:#333">38.60</div>
<div class="abs t" style="left:945.25px;top:785px;width:240px;text-align:center;color:#333">46.60</div>
<div class="abs t" style="left:1111.0px;top:785px;width:240px;text-align:center;color:#333">产品收益 SN1748937705</div>
<div class="abs t" style="left:1338.0px;top:785px;width:240px;text-align:center;color:#333">2025-06-07 00:05:01</div>
<div class="abs t" style="left:548.75px;top:832px;width:240px;text-align:center;color:#333">57</div>
<div class="abs t" style="left:654.75px;top:832px;width:240px;text-align:center;color:#333">13012345678</div>
<div class="abs t" style="left:773.0px;top:832px;width:240px;text-align:center;color:#333">20.00</div>
<div class="abs t" style="left:859.0px;top:832px;width:240px;text-align:center;color:#333">58.60</div>
<div class="abs t" style="left:945.25px;top:832px;width:240px;text-align:center;color:#333">38.60</div>
<div class="abs t" style="left:1111.0px;top:832px;width:240px;text-align:center;color:#333">划转到钱包</div>
<div class="abs t" style="left:1338.0px;top:832px;width:240px;text-align:center;color:#333">2025-06-06 22:57:16</div>
<div class="abs t" style="left:548.75px;top:879px;width:240px;text-align:center;color:#333">54</div>
<div class="abs t" style="left:654.75px;top:879px;width:240px;text-align:center;color:#333">13012345678</div>
<div class="abs t" style="left:773.0px;top:879px;width:240px;text-align:center;color:#333">0.80</div>
<div class="abs t" style="left:859.0px;top:879px;width:240px;text-align:center;color:#333">57.80</div>
<div class="abs t" style="left:945.25px;top:879px;width:240px;text-align:center;color:#333">58.60</div>
<div class="abs t" style="left:1111.0px;top:879px;width:240px;text-align:center;color:#333">产品收益 ZS1748963200</div>
<div class="abs t" style="left:1338.0px;top:879px;width:240px;text-align:center;color:#333">2025-06-05 00:05:01</div>
<div class="abs t" style="left:548.75px;top:926px;width:240px;text-align:center;color:#333">46</div>
<div class="abs t" style="left:654.75px;top:926px;width:240px;text-align:center;color:#333">13012345678</div>
<div class="abs t" style="left:773.0px;top:926px;width:240px;text-align:center;color:#333">8.00</div>
<div class="abs t" style="left:859.0px;top:926px;width:240px;text-align:center;color:#333">49.80</div>
<div class="abs t" style="left:945.25px;top:926px;width:240px;text-align:center;color:#333">57.80</div>
<div class="abs t" style="left:1111.0px;top:926px;width:240px;text-align:center;color:#333">产品收益 SN1748937705</div>
<div class="abs t" style="left:1338.0px;top:926px;width:240px;text-align:center;color:#333">2025-06-05 00:05:01</div>
</div></div>
<div class="abs" style="left:1593.5px;top:209px;width:14.5px;height:755px;background:#fbfbfb"></div>
<svg class="abs" style="left:1595.5px;top:213.5px;width:9.5px;height:8px" viewBox="0 0 9.5 8" fill="#8a8a8a"><path d="M4.75,0.5 L9.3,7.5 H0.2Z"/></svg>
<div class="abs" style="left:1596px;top:227px;width:9px;height:584px;background:#8a8a8a;border-radius:4.5px"></div>
<svg class="abs" style="left:1595.5px;top:953px;width:9.5px;height:8px" viewBox="0 0 9.5 8" fill="#8a8a8a"><path d="M4.75,7.5 L9.3,0.5 H0.2Z"/></svg>
<svg class="abs" style="left:836px;top:380px;width:305px;height:305px" viewBox="836 380 305 305" fill="#f00">
<circle cx="988.35" cy="532.25" r="139.3" fill="none" stroke="#f00" stroke-width="5.8"/>
<text x="988.35" y="545.8" text-anchor="middle" font-family="Liberation Sans" font-size="38.5" letter-spacing="1">515源码</text>
<text x="990.35" y="612.2" text-anchor="middle" font-family="Liberation Mono" font-size="29" letter-spacing="-0.2" stroke="#f00" stroke-width="0.9">5 5ym.com</text>
<path d="M937.2,592.9 L940.6,592.9 L940.6,612.2 L937.2,612.2 L937.2,597.8 C935.6,599.2 933.4,600.3 931,601 L931,597.9 C934,596.8 936.2,594.9 937.2,592.9Z"/>
<text x="0" y="0" text-anchor="middle" font-family="Liberation Sans" font-size="26.5" stroke="#f00" stroke-width="0.9" transform="translate(883.63,555.66) rotate(257.40)">w</text>
<text x="0" y="0" text-anchor="middle" font-family="Liberation Sans" font-size="26.5" stroke="#f00" stroke-width="0.9" transform="translate(881.25,525.70) rotate(273.50)">w</text>
<text x="0" y="0" text-anchor="middle" font-family="Liberation Sans" font-size="26.5" stroke="#f00" stroke-width="0.9" transform="translate(887.27,496.26) rotate(289.60)">w</text>
<text x="0" y="0" text-anchor="middle" font-family="Liberation Sans" font-size="26.5" stroke="#f00" stroke-width="0.9" transform="translate(901.21,469.64) rotate(305.70)">.</text>
<text x="0" y="0" text-anchor="middle" font-family="Liberation Sans" font-size="26.5" stroke="#f00" stroke-width="0.9" transform="translate(921.99,447.93) rotate(321.80)">5</text>
<path transform="translate(947.98,432.83) rotate(337.90)" d="M0.4,-19.3 L3.6,-19.3 L3.6,0 L0.4,0 L0.4,-14.4 C-1.2,-13 -3.2,-11.9 -5.4,-11.2 L-5.4,-14.2 C-2.6,-15.3 -0.6,-17.2 0.4,-19.3Z"/>
<text x="0" y="0" text-anchor="middle" font-family="Liberation Sans" font-size="26.5" stroke="#f00" stroke-width="0.9" transform="translate(977.13,425.54) rotate(354.00)">5</text>
<text x="0" y="0" text-anchor="middle" font-family="Liberation Sans" font-size="26.5" stroke="#f00" stroke-width="0.9" transform="translate(1007.17,426.61) rotate(370.10)">y</text>
<text x="0" y="0" text-anchor="middle" font-family="Liberation Sans" font-size="26.5" stroke="#f00" stroke-width="0.9" transform="translate(1035.72,435.97) rotate(386.20)">m</text>
<text x="0" y="0" text-anchor="middle" font-family="Liberation Sans" font-size="26.5" stroke="#f00" stroke-width="0.9" transform="translate(1060.56,452.89) rotate(402.30)">.</text>
<text x="0" y="0" text-anchor="middle" font-family="Liberation Sans" font-size="26.5" stroke="#f00" stroke-width="0.9" transform="translate(1079.74,476.03) rotate(418.40)">c</text>
<text x="0" y="0" text-anchor="middle" font-family="Liberation Sans" font-size="26.5" stroke="#f00" stroke-width="0.9" transform="translate(1091.75,503.58) rotate(434.50)">o</text>
<text x="0" y="0" text-anchor="middle" font-family="Liberation Sans" font-size="26.5" stroke="#f00" stroke-width="0.9" transform="translate(1095.64,533.37) rotate(450.60)">m</text>
<text x="0" y="0" text-anchor="middle" font-family="Liberation Sans" font-style="italic" font-size="13.5" transform="translate(928.29,648.11) rotate(27.40)">5</text>
<text x="0" y="0" text-anchor="middle" font-family="Liberation Sans" font-style="italic" font-size="13.5" transform="translate(942.01,654.24) rotate(20.80)">1</text>
<text x="0" y="0" text-anchor="middle" font-family="Liberation Sans" font-style="italic" font-size="13.5" transform="translate(956.34,658.76) rotate(14.20)">5</text>
<text x="0" y="0" text-anchor="middle" font-family="Liberation Sans" font-style="italic" font-size="13.5" transform="translate(971.09,661.60) rotate(7.60)">y</text>
<text x="0" y="0" text-anchor="middle" font-family="Liberation Sans" font-style="italic" font-size="13.5" transform="translate(986.07,662.73) rotate(1.00)">m</text>
<text x="0" y="0" text-anchor="middle" font-family="Liberation Sans" font-style="italic" font-size="13.5" transform="translate(1001.08,662.13) rotate(-5.60)">.</text>
<text x="0" y="0" text-anchor="middle" font-family="Liberation Sans" font-style="italic" font-size="13.5" transform="translate(1015.93,659.80) rotate(-12.20)">c</text>
<text x="0" y="0" text-anchor="middle" font-family="Liberation Sans" font-style="italic" font-size="13.5" transform="translate(1030.41,655.79) rotate(-18.80)">o</text>
<text x="0" y="0" text-anchor="middle" font-family="Liberation Sans" font-style="italic" font-size="13.5" transform="translate(1044.33,650.14) rotate(-25.40)">m</text>
</svg>
</body></html>
